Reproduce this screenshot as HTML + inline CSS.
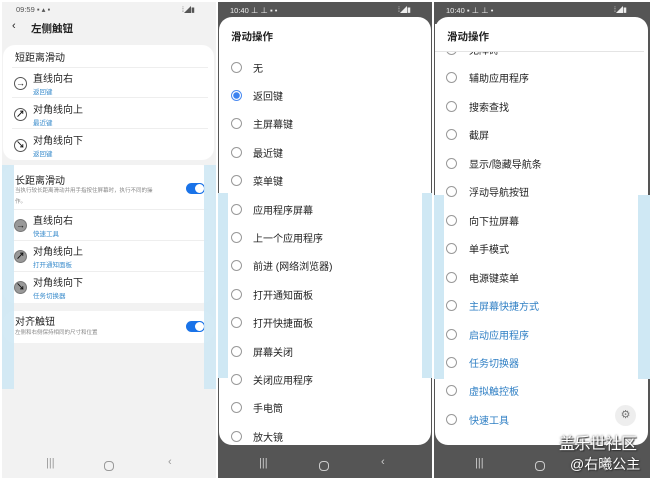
<!DOCTYPE html>
<html><head><meta charset="utf-8"><style>
*{margin:0;padding:0;box-sizing:border-box}
body{width:650px;height:480px;background:#fff;position:relative;overflow:hidden;font-family:"Liberation Sans","Noto Sans CJK SC",sans-serif;color:#222}
.a{position:absolute;white-space:nowrap}
.p{position:absolute;top:2px;height:476px;overflow:hidden}
.card{position:absolute;background:#fff;border-radius:12px}
.t{font-size:10px;color:#222;margin-top:-2px}
.s{font-size:6.5px;color:#3a8ccc;margin-top:-2px}
.d{font-size:5.5px;color:#888;margin-top:-2px}
.ic{position:absolute;width:13px;height:13px;border-radius:50%;border:1px solid #555;font-size:9px;line-height:11px;text-align:center;color:#111;font-weight:bold;margin-top:-1px}
.ic.f{background:#999;border-color:#777}
.sep{position:absolute;height:1px;background:#eee}
.rad{position:absolute;width:11px;height:11px;border-radius:50%;border:1px solid #999}
.tog{position:absolute;width:19px;height:11px;border-radius:6px;background:#1a73e8}
.tog:after{content:"";position:absolute;right:0;top:0;width:11px;height:11px;border-radius:50%;background:#fff;border:1.2px solid #1a73e8;box-sizing:border-box}
.blue{position:absolute;background:#cfe8f4}
.nav{position:absolute;font-size:11px}
</style></head><body>

<!-- panel 1 -->
<div class="p" style="left:2px;width:214px;background:#f2f2f2">
 <div class="a" style="left:14px;top:3px;font-size:7.5px;color:#555">09:59 ▪ ▴ ▪</div>
 <div class="a" style="left:180px;top:3px;font-size:7px;color:#555">⁞◢▮</div>
 <div class="a" style="left:10px;top:18px;font-size:11px;color:#222">‹</div>
 <div class="a" style="left:29px;top:19px;font-size:10.5px;font-weight:bold;color:#222">左侧触钮</div>
 <div class="card" style="left:1px;top:43px;width:211px;height:115px"></div>
 <div class="a t" style="left:13px;top:49px">短距离滑动</div>
 <div class="sep" style="left:10px;top:65px;width:196px"></div>
 <div class="ic" style="left:12px;top:76px">→</div>
 <div class="a t" style="left:31px;top:70px">直线向右</div><div class="a s" style="left:31px;top:86px">返回键</div>
 <div class="sep" style="left:10px;top:95px;width:196px"></div>
 <div class="ic" style="left:12px;top:107px">↗</div>
 <div class="a t" style="left:31px;top:101px">对角线向上</div><div class="a s" style="left:31px;top:117px">最近键</div>
 <div class="sep" style="left:10px;top:126px;width:196px"></div>
 <div class="ic" style="left:12px;top:138px">↘</div>
 <div class="a t" style="left:31px;top:132px">对角线向下</div><div class="a s" style="left:31px;top:148px">返回键</div>

 <div class="card" style="left:1px;top:163px;width:211px;height:138px"></div>
 <div class="a t" style="left:13px;top:172px">长距离滑动</div>
 <div class="a d" style="left:13px;top:186px">当执行较长距离滑动并用手指按住屏幕时，执行不同的操</div>
 <div class="a d" style="left:13px;top:197px">作。</div>
 <div class="tog" style="left:184px;top:181px"></div>
 <div class="sep" style="left:10px;top:207px;width:196px"></div>
 <div class="ic f" style="left:12px;top:218px">→</div>
 <div class="a t" style="left:31px;top:212px">直线向右</div><div class="a s" style="left:31px;top:228px">快速工具</div>
 <div class="sep" style="left:10px;top:238px;width:196px"></div>
 <div class="ic f" style="left:12px;top:249px">↗</div>
 <div class="a t" style="left:31px;top:243px">对角线向上</div><div class="a s" style="left:31px;top:259px">打开通知面板</div>
 <div class="sep" style="left:10px;top:269px;width:196px"></div>
 <div class="ic f" style="left:12px;top:280px">↘</div>
 <div class="a t" style="left:31px;top:274px">对角线向下</div><div class="a s" style="left:31px;top:290px">任务切换器</div>

 <div class="card" style="left:1px;top:309px;width:211px;height:32px"></div>
 <div class="a t" style="left:13px;top:313px">对齐触钮</div>
 <div class="a d" style="left:13px;top:328px">左侧和右侧保持相同的尺寸和位置</div>
 <div class="tog" style="left:184px;top:319px"></div>
 <div class="blue" style="left:0;top:163px;width:12px;height:224px;opacity:.9"></div>
 <div class="blue" style="left:202px;top:163px;width:12px;height:224px;opacity:.9"></div>
 <div class="nav" style="left:44px;top:455px;color:#999">|||</div>
 <div class="a" style="left:102px;top:459px;width:10px;height:10px;border:1.2px solid #999;border-radius:4px"></div>
 <div class="nav" style="left:166px;top:454px;color:#999">‹</div>
</div>

<!-- panel 2 -->
<div class="p" style="left:218px;width:214px;background:#555">
 <div class="a" style="left:12px;top:3px;font-size:7.5px;color:#eee">10:40 ⊥ ⊥ ▪ •</div>
 <div class="a" style="left:180px;top:3px;font-size:7px;color:#eee">⁞◢▮</div>
 <div class="a" style="left:1px;top:15px;width:212px;height:428px;background:#fff;border-radius:13px"></div>
 <div class="blue" style="left:0;top:191px;width:10px;height:185px"></div>
 <div class="blue" style="left:204px;top:191px;width:10px;height:185px"></div>
 <div class="a" style="left:13px;top:27px;font-size:10.5px;font-weight:bold">滑动操作</div>
 <div id="l2"></div>
 <div class="nav" style="left:41px;top:455px;color:#ccc">|||</div>
 <div class="a" style="left:101px;top:459px;width:10px;height:10px;border:1.2px solid #ccc;border-radius:4px"></div>
 <div class="nav" style="left:163px;top:454px;color:#ccc">‹</div>
</div>

<!-- panel 3 -->
<div class="p" style="left:434px;width:216px;background:#555">
 <div class="a" style="left:12px;top:3px;font-size:7.5px;color:#eee">10:40 ▪ ⊥ ⊥ •</div>
 <div class="a" style="left:180px;top:3px;font-size:7px;color:#eee">⁞◢▮</div>
 <div class="a" style="left:1px;top:15px;width:213px;height:428px;background:#fff;border-radius:13px"></div>
 <div class="blue" style="left:0;top:193px;width:10px;height:184px"></div>
 <div class="blue" style="left:204px;top:193px;width:12px;height:184px"></div>
 <div id="l3"></div>
 <div class="a" style="left:1px;top:22px;width:209px;height:28px;background:#fff;border-bottom:1px solid #e4e4e4"></div>
 <div class="a" style="left:13px;top:27px;font-size:10.5px;font-weight:bold">滑动操作</div>
 <div class="a" style="left:181px;top:403px;width:21px;height:21px;border-radius:50%;background:#eee;color:#777;font-size:11px;line-height:21px;text-align:center">⚙</div>
 <div class="nav" style="left:41px;top:455px;color:#ccc">|||</div>
 <div class="a" style="left:101px;top:459px;width:10px;height:10px;border:1.2px solid #ccc;border-radius:4px"></div>
 <div class="a" style="left:125px;top:428px;font-size:16px;color:#fff;text-shadow:0 0 2px #333,1px 1px 1px #333;letter-spacing:-0.5px">盖乐世社区</div>
 <div class="a" style="left:136px;top:452px;font-size:14px;color:#fff;text-shadow:0 0 2px #333,1px 1px 1px #333">@右曦公主</div>
</div>

<script>
var a=["无","返回键","主屏幕键","最近键","菜单键","应用程序屏幕","上一个应用程序","前进 (网络浏览器)","打开通知面板","打开快捷面板","屏幕关闭","关闭应用程序","手电筒","放大镜"];
var h="";a.forEach(function(t,i){var y=59.5+i*28.4;
h+='<div class="rad" style="left:13px;top:'+(y)+'px;'+(i==1?'border-color:#4a8af0;background:radial-gradient(circle,#3b82f0 0 3px,#fff 3.5px)':'')+'"></div><div class="a t" style="left:35px;top:'+(y)+'px">'+t+'</div>';});
document.getElementById("l2").innerHTML=h;
var b=["无障碍","辅助应用程序","搜索查找","截屏","显示/隐藏导航条","浮动导航按钮","向下拉屏幕","单手模式","电源键菜单","主屏幕快捷方式","启动应用程序","任务切换器","虚拟触控板","快速工具"];
h="";b.forEach(function(t,i){var y=42+i*28.45;
h+='<div class="rad" style="left:12px;top:'+y+'px"></div><div class="a t" style="left:35px;top:'+(y)+'px;'+(i>=9?'color:#2f7fc4':'')+'">'+t+'</div>';});
document.getElementById("l3").innerHTML=h;
</script>
</body></html>
